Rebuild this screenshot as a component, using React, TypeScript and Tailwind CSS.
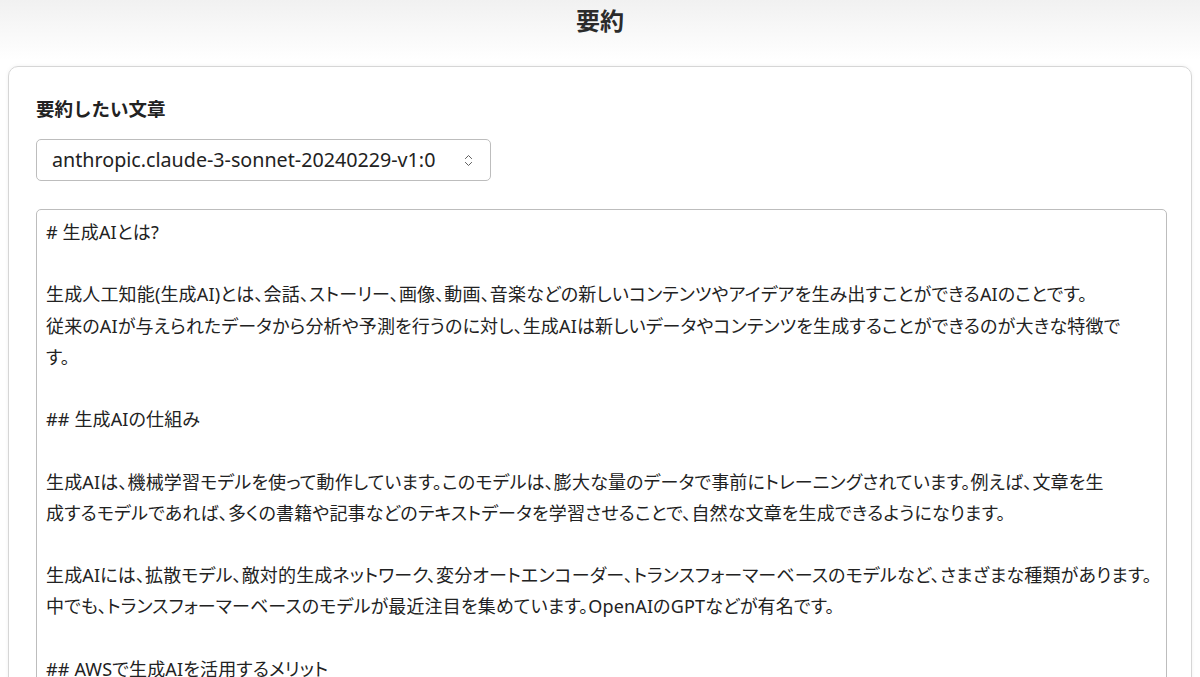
import { ChevronsUpDown } from 'lucide-react'

// line breaks follow the wrap points of the original view
const TEXT = [
  '# 生成AIとは?',
  '',
  '生成人工知能(生成AI)とは、会話、ストーリー、画像、動画、音楽などの新しいコンテンツやアイデアを生み出すことができるAIのことです。',
  '従来のAIが与えられたデータから分析や予測を行うのに対し、生成AIは新しいデータやコンテンツを生成することができるのが大きな特徴で',
  'す。',
  '',
  '## 生成AIの仕組み',
  '',
  '生成AIは、機械学習モデルを使って動作しています。このモデルは、膨大な量のデータで事前にトレーニングされています。例えば、文章を生',
  '成するモデルであれば、多くの書籍や記事などのテキストデータを学習させることで、自然な文章を生成できるようになります。',
  '',
  '生成AIには、拡散モデル、敵対的生成ネットワーク、変分オートエンコーダー、トランスフォーマーベースのモデルなど、さまざまな種類があります。',
  '中でも、トランスフォーマーベースのモデルが最近注目を集めています。OpenAIのGPTなどが有名です。',
  '',
  '## AWSで生成AIを活用するメリット',
  '',
  'AWSでは、生成AIを活用するためのさまざまなサービスが提供されています。',
].join('\n')

export default function App() {
  return (
    <div
      className="min-h-screen bg-white text-[#333]"
      style={{ fontFamily: '"Noto Sans", "Noto Sans CJK JP", sans-serif' }}
    >
      {/* Header */}
      <div className="h-[60px] bg-gradient-to-b from-[#f1f1f1] to-white flex justify-center">
        <h1 className="text-[24px] font-bold leading-none pt-[9px] text-[#2b2b2b]">要約</h1>
      </div>

      <div className="px-2 pt-[6px]">
        <div className="rounded-[10px] border border-[#d6d6d6] shadow-[0_0_4px_rgba(0,0,0,0.06)] px-[27px] pt-[28px] pb-6">
          <h2 className="text-[18.5px] font-semibold leading-[28px] text-[#222]">要約したい文章</h2>

          <div className="mt-[16px] w-[455px] h-[42px] border border-[#bdbdbd] rounded-[5px] flex items-center justify-between pl-[15px] pr-[14px]">
            <span className="text-[19.7px] text-[#222]">anthropic.claude-3-sonnet-20240229-v1:0</span>
            <ChevronsUpDown className="w-[15px] h-[15px] text-[#555]" strokeWidth={1.5} />
          </div>

          <textarea
            className="mt-[28px] block w-[1131px] h-[600px] border border-[#bdbdbd] rounded-[5px] px-[9px] py-[7px] text-[18px] leading-[31.2px] text-[#222] resize-none outline-none [font-feature-settings:'palt'] tracking-[0.15px]"
            style={{ fontFamily: '"Noto Sans", "Noto Sans CJK JP", sans-serif' }}
            defaultValue={TEXT}
          />
        </div>
      </div>
    </div>
  )
}
